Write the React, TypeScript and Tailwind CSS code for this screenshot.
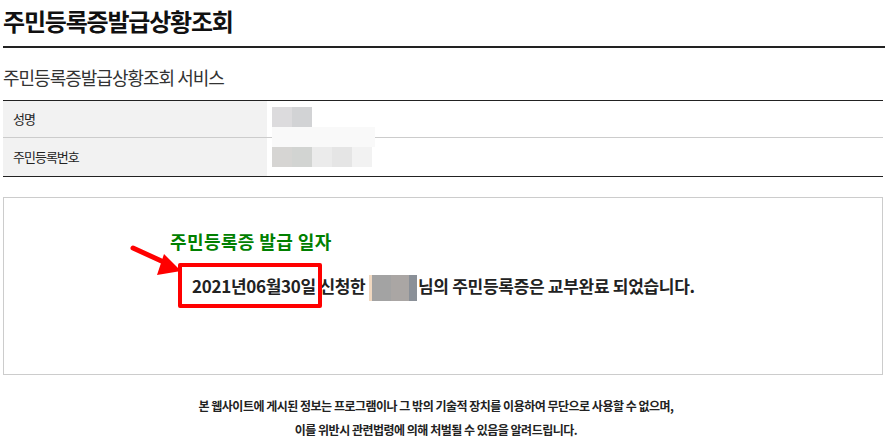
import React from 'react';

const font = { fontFamily: "'Noto Sans CJK KR', 'Noto Sans', sans-serif" };

function Blur({ colors, className }: { colors: string[]; className?: string }) {
  return (
    <div className={`flex ${className ?? ''}`}>
      {colors.map((c, i) => (
        <div key={i} className="w-5 h-5" style={{ background: c }} />
      ))}
    </div>
  );
}

export default function App() {
  return (
    <div className="w-[885px] h-[446px] bg-white text-[#222] overflow-hidden" style={font}>
      <div className="pl-[3px]">
        {/* 제목 */}
        <div className="h-[48px] border-b-2 border-[#222] pt-[3px]">
          <h1 className="text-[24px] font-bold leading-[36px] tracking-[-1.2px] text-[#111]">주민등록증발급상황조회</h1>
        </div>

        {/* 서비스 */}
        <div className="h-[52px] pt-[16px]">
          <h2 className="text-[18px] leading-[26px] tracking-[-1px] text-[#333]">주민등록증발급상황조회 서비스</h2>
        </div>

        {/* 정보 테이블 */}
        <div className="relative w-[880px] border-t border-b border-[#222]">
          <div className="flex h-[37px] border-b border-[#ccc]">
            <div className="w-[264px] bg-[#f2f2f2] flex items-center pl-[10px] text-[13px] tracking-[-1px] text-[#222]">성명</div>
            <div className="flex-1" />
          </div>
          <div className="flex h-[38px]">
            <div className="w-[264px] bg-[#f2f2f2] flex items-center pl-[10px] text-[13px] tracking-[-1px] text-[#222]">주민등록번호</div>
            <div className="flex-1" />
          </div>
          <div className="absolute left-[269px] top-[6px]">
            <Blur colors={['#dcdbdd', '#d2d3d5']} />
            <div className="w-[103px] h-5 bg-[#f9f9f9]" />
            <Blur colors={['#d6d5d3', '#d2d4d2', '#ebebeb', '#e5e5e5', '#f2f2f2']} />
          </div>
        </div>

        {/* 결과 박스 */}
        <div className="relative mt-[20px] w-[880px] h-[178px] border border-[#ccc] pt-[31px]">
          <div className="pl-[166px] text-[18px] leading-[24px] font-bold tracking-[0.4px] text-[#008000]">주민등록증 발급 일자</div>
          <div className="mt-[21px] pl-[188px] text-[17px] leading-[24px] font-bold tracking-[-0.3px] text-[#222] whitespace-nowrap">
            <span className="relative">
              2021년06월30일
              <span className="absolute left-[-14px] right-[-6px] top-[-10px] bottom-[-10px] border-4 border-[#ff0000] rounded-[2px]" />
            </span>{' '}
            신청한{' '}
            <span className="inline-flex align-middle w-[48px] h-[26px] mr-[1px]">
              <span className="w-[3px] bg-[#f0d8c0]" />
              <span className="w-[19px] bg-[#a3a3a3]" />
              <span className="w-[18px] bg-[#aaa6a4]" />
              <span className="w-[8px] bg-[#8a9098]" />
            </span>
            님의 주민등록증은 교부완료 되었습니다.
          </div>
          <svg className="absolute left-[124px] top-[44px]" width="58" height="38" viewBox="0 0 58 38">
            <line x1="5" y1="6" x2="40" y2="22" stroke="#ff0000" strokeWidth="5" strokeLinecap="round" />
            <polygon points="53,29 36,12 29,33" fill="#ff0000" />
          </svg>
        </div>

        {/* 안내 */}
        <div className="w-[866px] pt-[19px] text-center text-[12px] leading-[24px] font-bold tracking-[-0.5px] text-[#222]">
          <p>본 웹사이트에 게시된 정보는 프로그램이나 그 밖의 기술적 장치를 이용하여 무단으로 사용할 수 없으며,</p>
          <p>이를 위반시 관련법령에 의해 처벌될 수 있음을 알려드립니다.</p>
        </div>
      </div>
    </div>
  );
}
